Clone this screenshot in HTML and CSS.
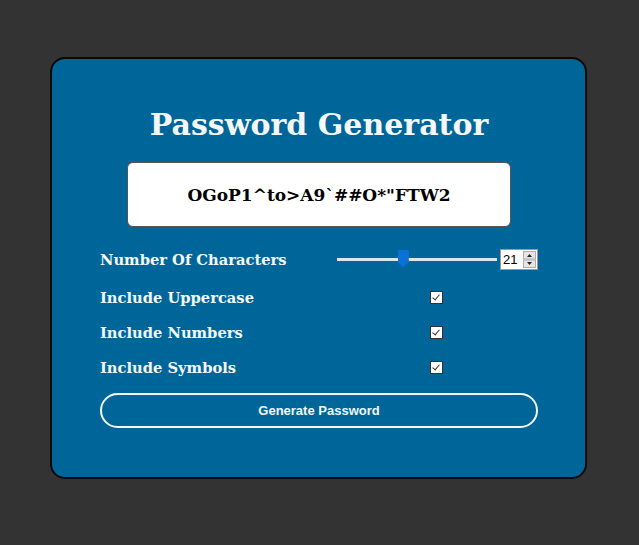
FILE: index.html
```html
<!DOCTYPE html>
<html lang="en">
<head>
<meta charset="utf-8">
<title>Password Generator</title>
<link rel="stylesheet" href="styles.css">
</head>
<body>
<main class="card">
  <h1 class="title">Password Generator</h1>
  <div class="output">OGoP1^to&gt;A9`##O*"FTW2</div>
  <div class="row row-first">
    <label class="label">Number Of Characters</label>
    <div class="control">
      <input class="range" type="range" min="1" max="50" value="21">
      <div class="number">
        <span class="number-value">21</span>
        <span class="spin">
          <svg width="13" height="17" viewBox="0 0 13 17">
            <rect x="0.5" y="0.5" width="12" height="7.5" fill="#e6e6e6" stroke="#adadad"/>
            <rect x="0.5" y="9" width="12" height="7.5" fill="#e6e6e6" stroke="#adadad"/>
            <path d="M4 6 L6.5 3 L9 6 Z" fill="#222"/>
            <path d="M4 11 L9 11 L6.5 14 Z" fill="#222"/>
          </svg>
        </span>
      </div>
    </div>
  </div>
  <div class="row">
    <label class="label">Include Uppercase</label>
    <div class="control center"><input class="check" type="checkbox" checked></div>
  </div>
  <div class="row">
    <label class="label">Include Numbers</label>
    <div class="control center"><input class="check" type="checkbox" checked></div>
  </div>
  <div class="row">
    <label class="label">Include Symbols</label>
    <div class="control center"><input class="check" type="checkbox" checked></div>
  </div>
  <button class="generate" type="button">Generate Password</button>
</main>
</body>
</html>
```
FILE: styles.css
```css
* { box-sizing: border-box; }

body {
  margin: 0;
  padding-top: 57px;
  background: #333333;
  font-family: "DejaVu Serif", "Liberation Serif", serif;
}

.card {
  width: 537px;
  height: 422px;
  margin: 0 0 0 50px;
  background: #006699;
  border: 2px solid #0a0a0a;
  border-radius: 15px;
  padding: 46px 47px 0 48px;
  color: #f4f8fb;
}

.title {
  margin: 0;
  height: 40px;
  line-height: 40px;
  font-size: 30px;
  font-weight: bold;
  text-align: center;
  color: #f4f8fb;
}

.output {
  margin: 17px auto 0;
  width: 384px;
  height: 65px;
  background: #ffffff;
  border: 1px solid #555;
  border-radius: 6px;
  display: flex;
  align-items: center;
  justify-content: center;
  font-size: 17px;
  font-weight: bold;
  color: #000;
}

.row {
  display: flex;
  align-items: center;
  height: 35px;
}

.row-first {
  margin-top: 15px;
  margin-bottom: 3px;
}

.label {
  width: 237px;
  font-size: 14.7px;
  font-weight: bold;
  color: #f4f8fb;
}

.control {
  flex: 1;
  display: flex;
  align-items: center;
}

.control.center { justify-content: center; padding-right: 2px; }

.range {
  -webkit-appearance: none;
  appearance: none;
  width: 160px;
  height: 20px;
  margin: 0;
  background: transparent;
}

.range::-webkit-slider-runnable-track {
  height: 3px;
  background: #dce6ee;
}

.range::-webkit-slider-thumb {
  -webkit-appearance: none;
  width: 11px;
  height: 17px;
  margin-top: -8px;
  background: #0a72d6;
  clip-path: polygon(0 0, 100% 0, 100% 72%, 50% 100%, 0 72%);
  border-radius: 1px;
}

.number {
  margin-left: 3px;
  width: 38px;
  height: 21px;
  background: #fff;
  border: 1px solid #9a9a9a;
  display: flex;
  align-items: center;
  justify-content: space-between;
  padding: 0 1px 0 2px;
}

.number-value {
  font-family: "Liberation Sans", Arial, sans-serif;
  font-size: 13px;
  color: #000;
}

.spin { display: flex; }

.check {
  -webkit-appearance: none;
  appearance: none;
  position: relative;
  width: 13px;
  height: 13px;
  margin: 0;
  background: #fff;
  border: 1px solid #333;
}

.check:checked::after {
  content: "";
  position: absolute;
  left: 3px;
  top: 1px;
  width: 3px;
  height: 6px;
  border-right: 1.5px solid #333;
  border-bottom: 1.5px solid #333;
  transform: rotate(40deg);
}

.generate {
  display: block;
  width: 438px;
  height: 35px;
  margin-top: 8px;
  background: transparent;
  border: 2px solid #f4f8fb;
  border-radius: 18px;
  color: #f4f8fb;
  font-family: "Liberation Sans", Arial, sans-serif;
  font-size: 13px;
  font-weight: bold;
}
```
